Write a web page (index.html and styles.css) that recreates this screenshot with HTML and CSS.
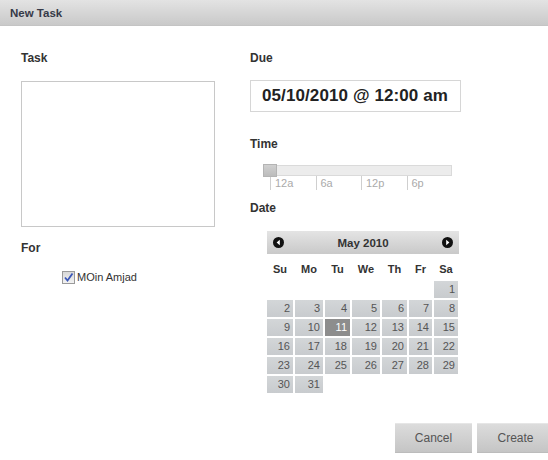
FILE: index.html
```html
<!DOCTYPE html>
<html>
<head>
<meta charset="utf-8">
<link rel="stylesheet" href="styles.css">
</head>
<body>
<div class="dialog">
  <div class="titlebar">New Task</div>
  <div class="content">
    <div class="col-left">
      <div class="label">Task</div>
      <div class="textarea"></div>
      <div class="label label-for">For</div>
      <div class="check-row">
        <span class="checkbox"><svg width="11" height="11" viewBox="0 0 11 11"><path d="M2 5.5 L4.5 8.5 L9.5 1.5" fill="none" stroke="#3b57b8" stroke-width="1.8"/></svg></span>
        <span class="check-label">MOin Amjad</span>
      </div>
    </div>
    <div class="col-right">
      <div class="label">Due</div>
      <div class="due-box">05/10/2010 @ 12:00 am</div>
      <div class="label label-time">Time</div>
      <div class="slider">
        <div class="track"><span class="handle"></span></div>
        <div class="ticks">
          <span class="tick">12a</span><span class="tick">6a</span><span class="tick">12p</span><span class="tick">6p</span>
        </div>
      </div>
      <div class="label label-date">Date</div>
      <div class="calendar">
        <div class="cal-head">
          <svg class="nav" width="11" height="11" viewBox="0 0 11 11"><circle cx="5.5" cy="5.5" r="5.5" fill="#111"/><path d="M6.8 2.8 L3.6 5.5 L6.8 8.2 Z" fill="#fff"/></svg>
          <span class="month">May 2010</span>
          <svg class="nav" width="11" height="11" viewBox="0 0 11 11"><circle cx="5.5" cy="5.5" r="5.5" fill="#111"/><path d="M4.2 2.8 L7.4 5.5 L4.2 8.2 Z" fill="#fff"/></svg>
        </div>
        <div class="cal-grid">
          <span class="dow">Su</span><span class="dow">Mo</span><span class="dow">Tu</span><span class="dow">We</span><span class="dow">Th</span><span class="dow">Fr</span><span class="dow">Sa</span>
          <span class="empty"></span><span class="empty"></span><span class="empty"></span><span class="empty"></span><span class="empty"></span><span class="empty"></span><span class="day">1</span>
          <span class="day">2</span><span class="day">3</span><span class="day">4</span><span class="day">5</span><span class="day">6</span><span class="day">7</span><span class="day">8</span>
          <span class="day">9</span><span class="day">10</span><span class="day selected">11</span><span class="day">12</span><span class="day">13</span><span class="day">14</span><span class="day">15</span>
          <span class="day">16</span><span class="day">17</span><span class="day">18</span><span class="day">19</span><span class="day">20</span><span class="day">21</span><span class="day">22</span>
          <span class="day">23</span><span class="day">24</span><span class="day">25</span><span class="day">26</span><span class="day">27</span><span class="day">28</span><span class="day">29</span>
          <span class="day">30</span><span class="day">31</span>
        </div>
      </div>
    </div>
  </div>
  <div class="footer">
    <button class="btn">Cancel</button>
    <button class="btn">Create</button>
  </div>
</div>
</body>
</html>
```
FILE: styles.css
```css
html, body {
  margin: 0;
  padding: 0;
  overflow: hidden;
  background: #fff;
}
body {
  font-family: "Liberation Sans", Arial, sans-serif;
  color: #333;
}
.dialog {
  width: 548px;
  height: 460px;
  overflow: hidden;
}
.titlebar {
  height: 26px;
  line-height: 26px;
  padding-left: 10px;
  font-size: 11.5px;
  font-weight: bold;
  color: #363a48;
  background: linear-gradient(#e3e3e3, #c9c9c9);
  border-bottom: 1px solid #c4c4c4;
  box-sizing: border-box;
}
.content {
  display: grid;
  grid-template-columns: 229px 1fr;
  padding-left: 21px;
}
.label {
  font-size: 12px;
  font-weight: bold;
  line-height: 14px;
  color: #333;
  margin-top: 25px;
}
.textarea {
  margin-top: 16px;
  width: 194px;
  height: 146px;
  box-sizing: border-box;
  border: 1px solid #c8c8c8;
  background: #fff;
}
.label-for {
  margin-top: 14px;
}
.check-row {
  margin-top: 15px;
  margin-left: 41px;
  display: flex;
  align-items: center;
  gap: 2px;
  height: 14px;
}
.checkbox {
  width: 13px;
  height: 13px;
  box-sizing: border-box;
  border: 1px solid #9a9a9a;
  background: linear-gradient(#d8d8d8, #f2f2f2);
  display: flex;
  align-items: center;
  justify-content: center;
}
.checkbox svg {
  display: block;
}
.check-label {
  font-size: 11px;
  color: #333;
}
.due-box {
  margin-top: 15px;
  width: 211px;
  height: 32px;
  box-sizing: border-box;
  border: 1px solid #d6d6d6;
  font-size: 17px;
  font-weight: bold;
  line-height: 30px;
  padding-left: 11px;
  color: #222;
  letter-spacing: 0.1px;
}
.label-time {
  margin-top: 25px;
}
.slider {
  margin-top: 14px;
  margin-left: 13px;
  width: 189px;
}
.track {
  position: relative;
  height: 11px;
  box-sizing: border-box;
  border: 1px solid #dadada;
  background: #ececec;
}
.handle {
  position: absolute;
  left: -1px;
  top: -2px;
  width: 14px;
  height: 13px;
  box-sizing: border-box;
  border: 1px solid #b4b4b4;
  background: linear-gradient(#d0d0d0, #bcbcbc);
}
.ticks {
  display: flex;
  padding-left: 7px;
  height: 14px;
}
.tick {
  width: 46px;
  box-sizing: border-box;
  border-left: 1px solid #cfcfcf;
  padding-left: 4px;
  font-size: 11px;
  line-height: 14px;
  color: #aaa;
}
.label-date {
  margin-top: 11px;
}
.calendar {
  margin-top: 16px;
  margin-left: 17px;
  width: 192px;
}
.cal-head {
  height: 23px;
  display: flex;
  align-items: center;
  justify-content: space-between;
  padding: 0 6px 0 6px;
  background: linear-gradient(#e4e4e4, #c9c9c9);
}
.nav {
  display: block;
}
.month {
  font-size: 11.5px;
  font-weight: bold;
  color: #333;
}
.cal-grid {
  margin-top: 5px;
  display: grid;
  grid-template-columns: 26px 28px 25px 28px 25px 23px 24px;
  grid-template-rows: 20px;
  grid-auto-rows: 17px;
  column-gap: 2px;
  row-gap: 2px;
}
.dow {
  text-align: center;
  font-size: 11px;
  font-weight: bold;
  line-height: 20px;
  color: #333;
}
.day {
  text-align: right;
  padding-right: 3px;
  font-size: 11px;
  line-height: 17px;
  color: #555;
  background: linear-gradient(#d3d6d8, #c8cbce);
}
.day.selected {
  background: #8d8d8d;
  color: #fff;
}
.footer {
  margin-top: 30px;
  padding-left: 395px;
  display: flex;
  gap: 5px;
}
.btn {
  flex: none;
  width: 77px;
  height: 30px;
  border: none;
  padding: 0;
  font-family: "Liberation Sans", Arial, sans-serif;
  font-size: 12px;
  color: #555;
  background: linear-gradient(#dcdcdc, #c5c5c5);
  border-top: 1px solid #e6e6e6;
  border-bottom: 1px solid #bcbcbc;
}
```
